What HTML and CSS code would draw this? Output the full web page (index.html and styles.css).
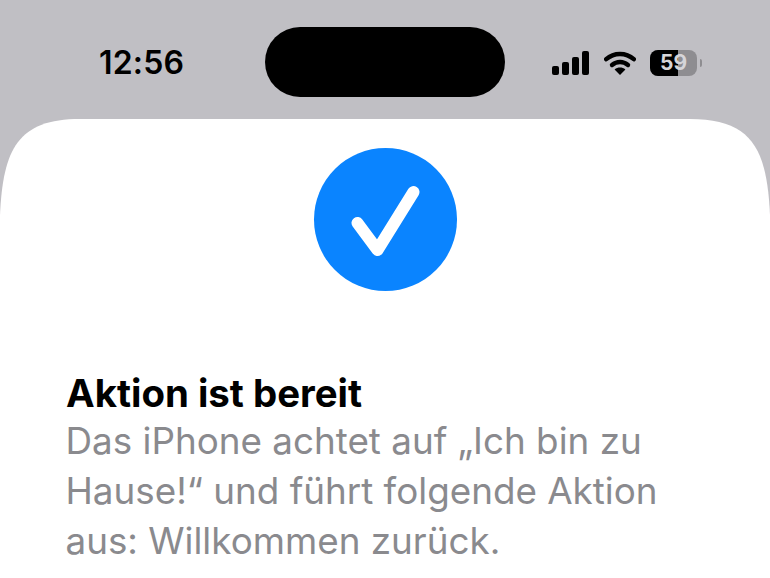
FILE: index.html
```html
<!DOCTYPE html>
<html lang="de">
<head>
    <meta charset="UTF-8">
    <meta name="viewport" content="width=device-width, initial-scale=1.0">
    <title>Aktion ist bereit</title>
    <link rel="stylesheet" href="styles.css">
</head>
<body>
    <header class="status-bar">
        <span class="time">12:56</span>
        <div class="island"></div>
        <div class="status-icons">
            <svg class="signal" width="38" height="24" viewBox="0 0 38 24">
                <rect x="0" y="15" width="7" height="9" rx="2"/>
                <rect x="10" y="11" width="7" height="13" rx="2"/>
                <rect x="20" y="6" width="7" height="18" rx="2"/>
                <rect x="30" y="0" width="7" height="24" rx="2"/>
            </svg>
            <svg class="wifi" width="32" height="24" viewBox="0 0 32 24">
                <path d="M2.2 8.2C10 1.2 22 1.2 29.8 8.2" fill="none" stroke="#000" stroke-width="4.4" stroke-linecap="round"/>
                <path d="M8 14C12.8 10 19.2 10 24 14" fill="none" stroke="#000" stroke-width="4.4" stroke-linecap="round"/>
                <path d="M16 24L10.6 18.4C13.8 15.8 18.2 15.8 21.4 18.4Z"/>
            </svg>
            <div class="battery">
                <div class="battery-body">
                    <div class="battery-fill"></div>
                    <span class="battery-level">59</span>
                </div>
                <div class="battery-cap"></div>
            </div>
        </div>
    </header>

    <main class="sheet">
        <div class="check-circle">
            <svg width="143" height="143" viewBox="0 0 143 143">
                <path d="M43.5 75L63.5 102L99.5 44" fill="none" stroke="#fff" stroke-width="12" stroke-linecap="round" stroke-linejoin="round"/>
            </svg>
        </div>
        <div class="message">
            <h1>Aktion ist bereit</h1>
            <p>Das iPhone achtet auf „Ich bin zu Hause!“ und führt folgende Aktion aus: Willkommen zurück.</p>
        </div>
    </main>
</body>
</html>
```
FILE: styles.css
```css
html, body {
    margin: 0;
    height: 100%;
    overflow: hidden;
}
body {
    width: 770px;
    height: 578px;
    background-color: #c0bfc4;
    font-family: Inter, "Liberation Sans", sans-serif;
    display: flex;
    flex-direction: column;
}
.status-bar {
    height: 119px;
    flex-shrink: 0;
    box-sizing: border-box;
    padding-top: 27px;
    display: grid;
    grid-template-columns: 265px 240px 1fr;
    align-items: start;
}
.time {
    padding-left: 99px;
    margin-top: 17px;
    font-size: 32px;
    line-height: 38px;
    font-weight: 560;
    letter-spacing: 0.2px;
    color: #000;
}
.island {
    height: 70px;
    border-radius: 35px;
    background-color: #000;
}
.status-icons {
    margin-top: 23px;
    padding-left: 47px;
    display: flex;
    align-items: center;
    gap: 14px;
}
.battery {
    display: flex;
    align-items: center;
    gap: 3px;
}
.battery-body {
    position: relative;
    width: 47px;
    height: 26px;
    border-radius: 8px;
    background-color: #8e8d91;
    overflow: hidden;
}
.battery-fill {
    width: 28px;
    height: 100%;
    background-color: #000;
}
.battery-level {
    position: absolute;
    inset: 0;
    text-align: center;
    font-size: 21px;
    line-height: 26px;
    font-weight: 700;
    color: #d6d5d9;
}
.battery-cap {
    width: 2px;
    height: 8px;
    border-radius: 0 2px 2px 0;
    background-color: #8e8d91;
}
.sheet {
    flex: 1;
    background-color: #fff;
    clip-path: path("M0 96C3 30 18 0 80 0L690 0C752 0 767 30 770 96L770 459L0 459Z");
    padding-top: 29px;
    display: flex;
    flex-direction: column;
    align-items: center;
}
.check-circle {
    width: 143px;
    height: 143px;
    border-radius: 50%;
    background-color: #0a84ff;
}
.check-circle svg {
    display: block;
}
.message {
    align-self: stretch;
    padding: 80px 66px 0;
}
h1 {
    margin: 0;
    font-size: 38.4px;
    line-height: 45px;
    font-weight: 700;
    color: #000;
}
p {
    margin: 0 0 0 -0.5px;
    font-size: 36.8px;
    line-height: 50px;
    color: #8a8a8e;
}
```
